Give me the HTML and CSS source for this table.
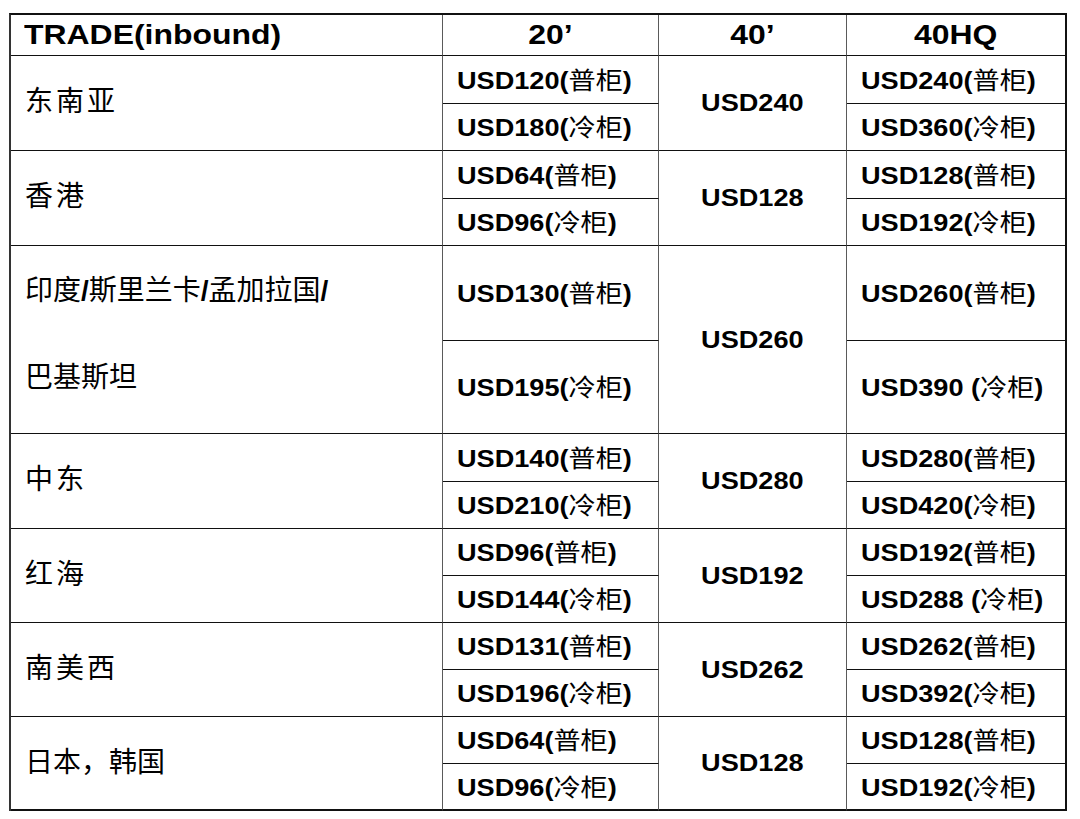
FILE: index.html
```html
<!DOCTYPE html>
<html lang="zh-CN">
<head>
<meta charset="utf-8">
<title>TRADE (inbound)</title>
<link rel="stylesheet" href="styles.css">
</head>
<body>
<div class="page">
<table class="rates">
  <colgroup>
    <col class="c1"><col class="c2"><col class="c3"><col class="c4">
  </colgroup>
  <thead>
    <tr class="head">
      <th class="trade"><span class="hx">TRADE(inbound)</span></th>
      <th><span class="hx">20’</span></th>
      <th><span class="hx">40’</span></th>
      <th class="last"><span class="hx">40HQ</span></th>
    </tr>
  </thead>
  <tbody>
    <tr class="sub plus">
      <td class="region short" rowspan="2">东南亚</td>
      <td class="val"><span class="vx">USD120(<span class="cj">普柜</span>)</span></td>
      <td class="mid" rowspan="2"><span class="mx">USD240</span></td>
      <td class="val last"><span class="vx">USD240(<span class="cj">普柜</span>)</span></td>
    </tr>
    <tr class="sub">
      <td class="val"><span class="vx">USD180(<span class="cj">冷柜</span>)</span></td>
      <td class="val last"><span class="vx">USD360(<span class="cj">冷柜</span>)</span></td>
    </tr>

    <tr class="sub plus">
      <td class="region short" rowspan="2">香港</td>
      <td class="val"><span class="vx">USD64(<span class="cj">普柜</span>)</span></td>
      <td class="mid" rowspan="2"><span class="mx">USD128</span></td>
      <td class="val last"><span class="vx">USD128(<span class="cj">普柜</span>)</span></td>
    </tr>
    <tr class="sub">
      <td class="val"><span class="vx">USD96(<span class="cj">冷柜</span>)</span></td>
      <td class="val last"><span class="vx">USD192(<span class="cj">冷柜</span>)</span></td>
    </tr>

    <tr class="tall">
      <td class="region multi" rowspan="2">印度<b>/</b>斯里兰卡<b>/</b>孟加拉国<b>/</b><br>巴基斯坦</td>
      <td class="val"><span class="vx">USD130(<span class="cj">普柜</span>)</span></td>
      <td class="mid" rowspan="2"><span class="mx">USD260</span></td>
      <td class="val last"><span class="vx">USD260(<span class="cj">普柜</span>)</span></td>
    </tr>
    <tr class="tall minus">
      <td class="val"><span class="vx">USD195(<span class="cj">冷柜</span>)</span></td>
      <td class="val last"><span class="vx">USD390 (<span class="cj">冷柜</span>)</span></td>
    </tr>

    <tr class="sub plus">
      <td class="region short" rowspan="2">中东</td>
      <td class="val"><span class="vx">USD140(<span class="cj">普柜</span>)</span></td>
      <td class="mid" rowspan="2"><span class="mx">USD280</span></td>
      <td class="val last"><span class="vx">USD280(<span class="cj">普柜</span>)</span></td>
    </tr>
    <tr class="sub">
      <td class="val"><span class="vx">USD210(<span class="cj">冷柜</span>)</span></td>
      <td class="val last"><span class="vx">USD420(<span class="cj">冷柜</span>)</span></td>
    </tr>

    <tr class="sub">
      <td class="region short" rowspan="2">红海</td>
      <td class="val"><span class="vx">USD96(<span class="cj">普柜</span>)</span></td>
      <td class="mid" rowspan="2"><span class="mx">USD192</span></td>
      <td class="val last"><span class="vx">USD192(<span class="cj">普柜</span>)</span></td>
    </tr>
    <tr class="sub">
      <td class="val"><span class="vx">USD144(<span class="cj">冷柜</span>)</span></td>
      <td class="val last"><span class="vx">USD288 (<span class="cj">冷柜</span>)</span></td>
    </tr>

    <tr class="sub">
      <td class="region short" rowspan="2">南美西</td>
      <td class="val"><span class="vx">USD131(<span class="cj">普柜</span>)</span></td>
      <td class="mid" rowspan="2"><span class="mx">USD262</span></td>
      <td class="val last"><span class="vx">USD262(<span class="cj">普柜</span>)</span></td>
    </tr>
    <tr class="sub">
      <td class="val"><span class="vx">USD196(<span class="cj">冷柜</span>)</span></td>
      <td class="val last"><span class="vx">USD392(<span class="cj">冷柜</span>)</span></td>
    </tr>

    <tr class="sub">
      <td class="region end" rowspan="2">日本，韩国</td>
      <td class="val"><span class="vx">USD64(<span class="cj">普柜</span>)</span></td>
      <td class="mid end" rowspan="2"><span class="mx">USD128</span></td>
      <td class="val last"><span class="vx">USD128(<span class="cj">普柜</span>)</span></td>
    </tr>
    <tr class="sub">
      <td class="val end"><span class="vx">USD96(<span class="cj">冷柜</span>)</span></td>
      <td class="val last end"><span class="vx">USD192(<span class="cj">冷柜</span>)</span></td>
    </tr>
  </tbody>
</table>
</div>
</body>
</html>
```

FILE: styles.css
```css
html, body {
  margin: 0;
  padding: 0;
  background: #ffffff;
  color: #000000;
}

.page {
  padding: 13px 0 0 9px;
}

.rates {
  border-collapse: separate;
  border-spacing: 0;
  table-layout: fixed;
  width: 1058px;
  border-top: 2px solid #111;
  border-left: 2px solid #333;
  font-family: "Liberation Sans", "Noto Sans CJK SC", sans-serif;
}

.c1 { width: 432px; }
.c2 { width: 216px; }
.c3 { width: 188px; }
.c4 { width: 220px; }

.rates th,
.rates td {
  padding: 0;
  border-right: 1px solid #5a5a5a;
  border-bottom: 1px solid #111;
  vertical-align: middle;
  white-space: nowrap;
  overflow: visible;
}

.rates .last {
  border-right: 2px solid #111;
}

.rates .end {
  border-bottom: 2px solid #111;
}

.head {
  height: 41px;
}

.sub {
  height: 47px;
}

.sub.plus {
  height: 48px;
}

.tall {
  height: 94px;
}

.tall.minus {
  height: 93px;
}

/* header */
.rates th {
  font-size: 28px;
  font-weight: 700;
  text-align: center;
  line-height: 30px;
}

.rates th.trade {
  text-align: left;
  padding-left: 13px;
}

.hx {
  display: inline-block;
  transform: scaleX(1.14);
  transform-origin: center center;
}

.trade .hx {
  transform-origin: left center;
}

/* region column */
.rates .region {
  font-family: "Noto Sans CJK SC", sans-serif;
  font-size: 28px;
  font-weight: 400;
  line-height: 30px;
  padding: 0 0 6px 14px;
  text-align: left;
}

.rates .region.short {
  letter-spacing: 3px;
  padding-bottom: 8px;
}

.region b {
  font-family: "Liberation Sans", sans-serif;
  font-weight: 700;
  letter-spacing: 0;
}

.rates .region.multi {
  line-height: 84px;
  padding-bottom: 16px;
}

/* value cells */
.rates .val {
  font-size: 24px;
  font-weight: 700;
  line-height: 28px;
  padding-left: 14px;
  text-align: left;
}

.vx {
  display: inline-block;
  transform: scaleX(1.13);
  transform-origin: left center;
}

.cj {
  font-family: "Noto Sans CJK SC", sans-serif;
  font-weight: 400;
}

.rates .mid {
  font-size: 24px;
  font-weight: 700;
  line-height: 28px;
  text-align: center;
}

.mx {
  display: inline-block;
  transform: scaleX(1.13);
  transform-origin: center center;
}
```
